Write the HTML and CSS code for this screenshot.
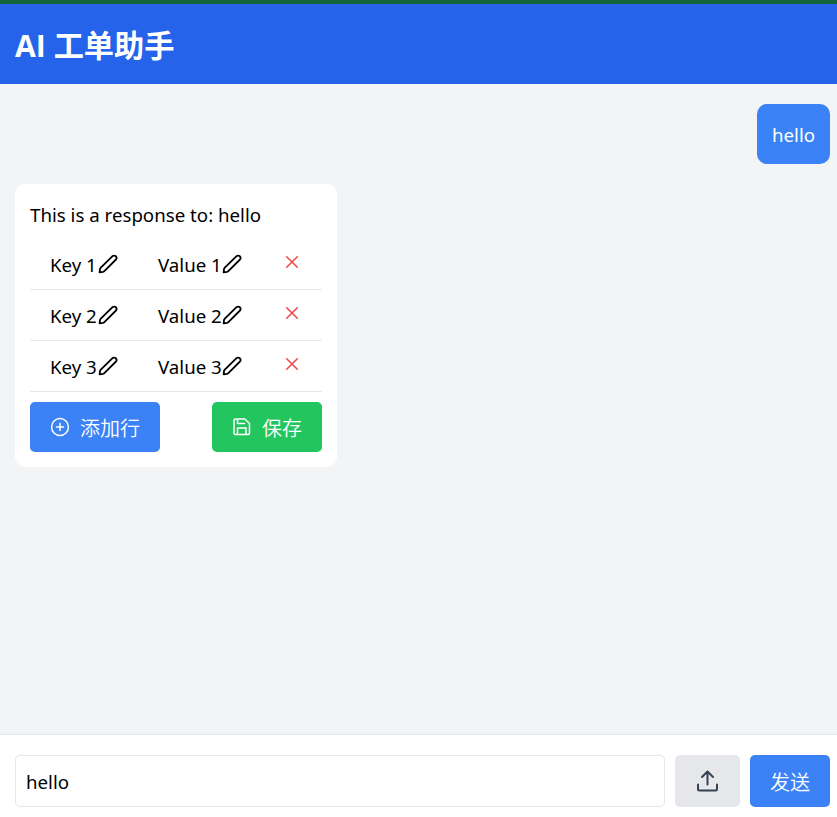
FILE: index.html
```html
<!DOCTYPE html>
<html lang="zh-CN">
<head>
<meta charset="utf-8">
<title>AI 工单助手</title>
<link rel="stylesheet" href="styles.css">
</head>
<body>
<svg class="defs" aria-hidden="true">
  <symbol id="pencil" viewBox="0 0 20 20"><path d="M1.600 18.400 2 15.200Q2.100 14.300 2.800 13.600L14.300 2.300Q16 1 17.700 2.100 19.400 3.900 18 5.500L6.600 16.900Q5.900 17.700 5 17.900Z"/></symbol>
  <symbol id="cross" viewBox="0 0 20 20"><path d="m4.700 4.700 10.600 10.600M15.300 4.700l-10.600 10.600"/></symbol>
</svg>
<header class="header"><h1 class="title">AI 工单助手</h1></header>
<main class="chat">
  <div class="bubble user">hello</div>
  <section class="bubble reply">
    <p class="message">This is a response to: hello</p>
    <div class="rows">
      <div class="row"><span class="cell key"><span class="label">Key 1</span><svg class="icon"><use href="#pencil"/></svg></span><span class="cell value"><span class="label">Value 1</span><svg class="icon"><use href="#pencil"/></svg></span><svg class="icon remove"><use href="#cross"/></svg></div>
      <div class="row"><span class="cell key"><span class="label">Key 2</span><svg class="icon"><use href="#pencil"/></svg></span><span class="cell value"><span class="label">Value 2</span><svg class="icon"><use href="#pencil"/></svg></span><svg class="icon remove"><use href="#cross"/></svg></div>
      <div class="row"><span class="cell key"><span class="label">Key 3</span><svg class="icon"><use href="#pencil"/></svg></span><span class="cell value"><span class="label">Value 3</span><svg class="icon"><use href="#pencil"/></svg></span><svg class="icon remove"><use href="#cross"/></svg></div>
    </div>
    <div class="actions">
      <button class="btn add"><svg class="icon thin" viewBox="0 0 20 20"><circle cx="10" cy="10" r="8.400"/><path d="M10 6.500v7M6.500 10h7"/></svg><span class="caption">添加行</span></button>
      <button class="btn save"><svg class="icon thin" viewBox="0 0 20 20"><path d="M3.500 2h9.300L17.500 6.500v9.500a1.500 1.500 0 0 1-1.500 1.500h-12.500A1.500 1.500 0 0 1 2 16v-12.500A1.500 1.500 0 0 1 3.500 2ZM5.500 2v4.500h7M5.500 17.500v-6.500h8.500v6.500"/></svg><span class="caption">保存</span></button>
    </div>
  </section>
</main>
<footer class="composer">
  <input class="input" value="hello">
  <button class="upload" aria-label="上传"><svg class="upload-icon" viewBox="0 0 24 24"><path d="M11.500 15.500V2.500M6 8 11.500 2.500 17 8M2 15.500v4.500a1.500 1.500 0 0 0 1.500 1.500h16a1.500 1.500 0 0 0 1.500-1.500v-4.500"/></svg></button>
  <button class="btn send"><span class="caption">发送</span></button>
</footer>
</body>
</html>
```
FILE: styles.css
```css
* { box-sizing: border-box; margin: 0; }
body {
  height: 817px;
  display: flex;
  flex-direction: column;
  overflow: hidden;
  background: #f3f4f6;
  border-top: 4px solid #14653a;
  color: #000;
  font: 18.7px/30px "Noto Sans", "Noto Sans CJK SC", sans-serif;
}
.defs { display: none; }
.header { height: 80px; padding: 22px 15px 18px; background: #2563eb; color: #fff; }
.title { font-size: 30.2px; line-height: 40px; font-weight: 700; font-family: "Open Sans", "Noto Sans CJK SC", sans-serif; }
.chat { flex: 1; padding: 20px 7px 20px 15px; display: flex; flex-direction: column; gap: 20px; }
.bubble { padding: 15px; border-radius: 10px; }
.user { align-self: flex-end; width: 73px; padding: 16px 15px 14px; background: #3b82f6; color: #fff; white-space: nowrap; }
.reply { width: 322px; padding-top: 16px; background: #fff; }
.message { margin-bottom: 9px; white-space: nowrap; }
.row { height: 51px; display: flex; align-items: center; border-bottom: 1px solid #e5e7eb; padding-left: 20px; }
.cell { display: flex; align-items: center; white-space: nowrap; }
.label { padding-top: 1px; margin-bottom: -1px; }
.key { width: 108px; }
.key .label { width: 48px; }
.value { width: 124px; }
.value .label { width: 64px; }
.icon { width: 20px; height: 20px; flex: none; fill: none; stroke: currentColor; stroke-width: 1.8; stroke-linecap: round; stroke-linejoin: round; }
.remove { color: #ef4444; stroke-width: 1.5; margin-top: -5px; }
.actions { display: flex; justify-content: space-between; margin-top: 10px; }
button { border: 0; border-radius: 5px; padding: 0; font: inherit; }
.btn { height: 50px; display: flex; align-items: center; color: #fff; font-size: 20px; padding: 0 20px; gap: 10px; white-space: nowrap; font-family: "Noto Sans CJK SC", sans-serif; font-weight: 350; }
.caption { padding-top: 2px; }
.thin { stroke-width: 1.5; }
.add { background: #3b82f6; }
.save { background: #22c55e; }
.composer { height: 83px; padding: 20px 7px 10px 15px; display: flex; gap: 10px; background: #fff; border-top: 1px solid #e5e7eb; }
.input { flex: 1; min-width: 0; height: 52px; border: 1px solid #e5e7eb; border-radius: 5px; padding: 0 10px; font: inherit; color: #000; }
.upload { width: 65px; height: 52px; display: flex; align-items: center; justify-content: center; background: #e5e7eb; color: #374151; }
.upload-icon { width: 24px; height: 24px; fill: none; stroke: currentColor; stroke-width: 2; stroke-linecap: round; stroke-linejoin: round; }
.send { height: 52px; width: 80px; background: #3b82f6; }
```
